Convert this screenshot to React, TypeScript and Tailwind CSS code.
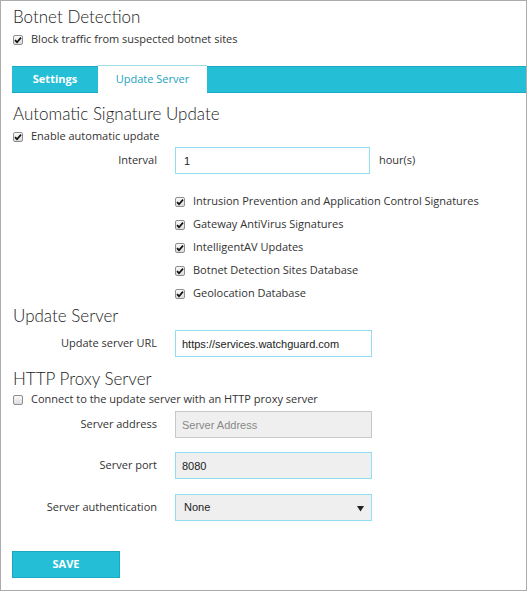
import type { ReactNode } from 'react'

const body = { fontFamily: '"Open Sans", "Liberation Sans", sans-serif' }
const heading = { fontFamily: 'Lato, "Open Sans", sans-serif' }
const arial = { fontFamily: '"Liberation Sans", Arial, sans-serif' }

function Check({ checked = true }: { checked?: boolean }) {
  return (
    <span className="inline-flex w-[10px] h-[10px] shrink-0 items-center justify-center rounded-[2px] border border-[#8f8f8f] bg-gradient-to-b from-[#fafafa] to-[#dcdcdc]">
      {checked && (
        <svg width="8" height="8" viewBox="0 0 8 8">
          <path d="M1 4.2 L3 6.2 L7 1.6" stroke="#111" strokeWidth="1.7" fill="none" />
        </svg>
      )}
    </span>
  )
}

function CheckRow({ label, checked = true, className = '' }: { label: string; checked?: boolean; className?: string }) {
  return (
    <div className={`flex items-center gap-[8px] h-[23px] ${className}`}>
      <Check checked={checked} />
      <span>{label}</span>
    </div>
  )
}

function Field({ label, children, className = '' }: { label: string; children: ReactNode; className?: string }) {
  return (
    <div className={`flex items-center ${className}`}>
      <div className="w-[156px] text-right">{label}</div>
      <div className="ml-[18px] flex items-center">{children}</div>
    </div>
  )
}

export default function App() {
  return (
    <div className="w-[527px] h-[591px] border border-[#ababab] bg-white text-[11px] text-[#333]" style={body}>
      <div className="pl-[12px] pt-[4px]">
        <h1 className="text-[17px] font-light leading-[24px] text-[#222]" style={heading}>Botnet Detection</h1>
        <CheckRow label="Block traffic from suspected botnet sites" className="mt-[-1px]" />
      </div>

      {/* tabs */}
      <div className="ml-[11px] mt-[15px] flex h-[27px] items-stretch border-y border-[#1ba9c3] bg-[#25bed7]">
        <div className="flex w-[86px] items-center justify-center font-bold text-white">Settings</div>
        <div className="mt-[-2px] mb-[-1px] flex w-[109px] items-center justify-center border-t border-[#9fdbe6] bg-white text-[#1ba3bd]">
          Update Server
        </div>
      </div>

      <div className="pl-[12px]">
        <h2 className="mt-[9px] text-[17px] font-light leading-[24px] text-[#222]" style={heading}>Automatic Signature Update</h2>
        <CheckRow label="Enable automatic update" className="mt-[-1px]" />
      </div>

      <Field label="Interval" className="mt-[-1px]">
        <input
          readOnly
          value="1"
          className="h-[27px] w-[195px] border border-[#8fdfee] bg-white px-[8px] text-[11px] text-[#222] outline-none"
          style={arial}
        />
        <span className="ml-[9px]">hour(s)</span>
      </Field>

      <div className="ml-[174px] mt-[16px] flex flex-col">
        <CheckRow label="Intrusion Prevention and Application Control Signatures" />
        <CheckRow label="Gateway AntiVirus Signatures" />
        <CheckRow label="IntelligentAV Updates" />
        <CheckRow label="Botnet Detection Sites Database" />
        <CheckRow label="Geolocation Database" />
      </div>

      <div className="pl-[12px]">
        <h2 className="mt-[-1px] text-[17px] font-light leading-[24px] text-[#222]" style={heading}>Update Server</h2>
      </div>

      <Field label="Update server URL" className="mt-[2px]">
        <input
          readOnly
          value="https://services.watchguard.com"
          className="h-[27px] w-[197px] border border-[#8fdfee] bg-white px-[6px] text-[11px] text-[#222] outline-none"
          style={arial}
        />
      </Field>

      <div className="pl-[12px]">
        <h2 className="mt-[10px] text-[17px] font-light leading-[24px] text-[#222]" style={heading}>HTTP Proxy Server</h2>
        <CheckRow label="Connect to the update server with an HTTP proxy server" checked={false} className="mt-[-3px]" />
      </div>

      <Field label="Server address" className="mt-[0px]">
        <input
          readOnly
          placeholder="Server Address"
          className="h-[27px] w-[197px] border border-[#c8c8c8] bg-[#efefef] px-[6px] text-[11px] text-[#222] outline-none placeholder:text-[#888]"
          style={arial}
        />
      </Field>

      <Field label="Server port" className="mt-[14px]">
        <input
          readOnly
          value="8080"
          className="h-[27px] w-[197px] border border-[#8fdfee] bg-[#efefef] px-[6px] text-[11px] text-[#222] outline-none"
          style={arial}
        />
      </Field>

      <Field label="Server authentication" className="mt-[15px]">
        <div className="flex h-[27px] w-[197px] items-center justify-between border border-[#8fdfee] bg-[#efefef] pl-[8px] pr-[6px] text-[11px] text-[#222]" style={arial}>
          <span>None</span>
          <svg width="9" height="9" viewBox="0 0 9 9" className="mt-[1px]">
            <path d="M1 2 H8 L4.5 7.5 Z" fill="#222" />
          </svg>
        </div>
      </Field>

      <div className="pl-[11px] mt-[30px]">
        <button className="flex h-[27px] w-[108px] items-center justify-center border border-[#1ba9c3] bg-[#25bed7] text-[11px] font-bold text-white">
          SAVE
        </button>
      </div>
    </div>
  )
}
